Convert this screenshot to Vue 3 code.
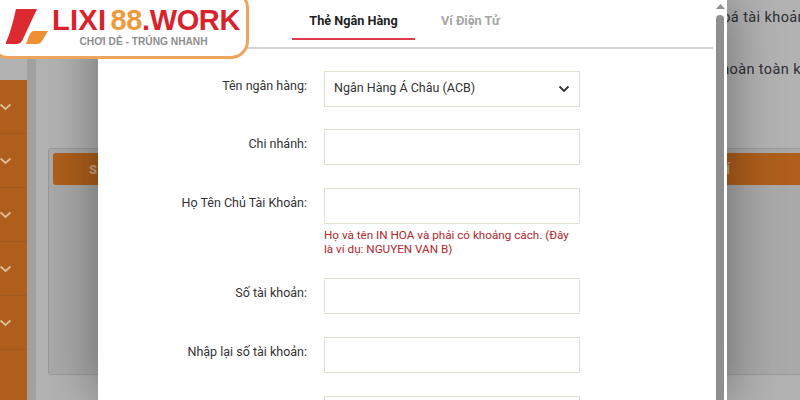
<script setup>
const sidebarRows = [1, 2, 3, 4, 5]

const fields = [
  { label: 'Chi nhánh:' },
  { label: 'Họ Tên Chủ Tài Khoản:', hint: 'Họ và tên IN HOA và phải có khoảng cách. (Đây là ví dụ: NGUYEN VAN B)' },
  { label: 'Số tài khoản:' },
  { label: 'Nhập lại số tài khoản:' },
  { label: '' }
]
</script>

<template>
  <div class="page">
    <div class="backdrop">
      <aside class="sidebar">
        <div v-for="row in sidebarRows" :key="row" class="side-row">
          <svg width="11" height="8" viewBox="0 0 11 8" class="side-chevron">
            <path d="M0.5 1.5 L5.5 6 L10.5 1.5" fill="none" stroke="#e0bd98" stroke-width="1.8" />
          </svg>
        </div>
      </aside>
      <div class="gutter"></div>
      <main class="content">
        <p class="bg-line first">oá tài khoản</p>
        <p class="bg-line second">hoàn toàn k</p>
        <section class="card">
          <div class="card-head">
            <span class="head-left">S</span>
            <span class="head-right">Í</span>
          </div>
        </section>
      </main>
    </div>

    <div class="modal">
      <div class="modal-body">
        <nav class="tabs">
          <button class="tab active">Thẻ Ngân Hàng</button>
          <button class="tab">Ví Điện Tử</button>
        </nav>
        <form class="form" @submit.prevent>
          <div class="row">
            <label class="label">Tên ngân hàng:</label>
            <div class="control select">
              <span class="select-text">Ngân Hàng Á Châu (ACB)</span>
              <svg width="12" height="8" viewBox="0 0 12 8">
                <path d="M1.5 1.5 L6 6 L10.5 1.5" fill="none" stroke="#333" stroke-width="1.8" />
              </svg>
            </div>
          </div>
          <div v-for="field in fields" :key="field.label" class="row">
            <label class="label">{{ field.label }}</label>
            <div class="stack">
              <div class="control"></div>
              <p v-if="field.hint" class="hint">{{ field.hint }}</p>
            </div>
          </div>
        </form>
      </div>
      <div class="scrollbar">
        <svg width="9" height="5" viewBox="0 0 9 5" class="arrow"><path d="M4.5 0 L9 5 H0 Z" fill="#8f8f8f" /></svg>
        <div class="thumb"></div>
      </div>
    </div>

    <div class="brand">
      <svg class="mark" width="46" height="38" viewBox="0 0 46 38">
        <path d="M10 0 H31 L16.5 31 C15 34 13 35 10 35 H1 C-1 35 0 33 1 31 C4 24 7 13 10 0 Z" fill="#dd2a30" />
        <path d="M27 22 H42 L36 32 C35 34 33 35 31 35 H20 C22 30 23 24 27 22 Z" fill="#ee8f33" />
      </svg>
      <div class="brand-text">
        <div class="brand-name"><span class="red lixi">LIXI</span><span class="orange">88</span><span class="red">.WORK</span></div>
        <div class="brand-tag">CHƠI DỄ - TRÚNG NHANH</div>
      </div>
    </div>
  </div>
</template>

<style scoped>
.page {
  position: relative;
  width: 800px;
  height: 400px;
  overflow: hidden;
  font-family: Roboto, "Liberation Sans", sans-serif;
  background: #b2b2b2;
}

.backdrop {
  display: flex;
  height: 400px;
}

.sidebar {
  width: 27px;
  flex: none;
  margin-top: 80px;
  background: #af5f1b;
}

.side-row {
  height: 54px;
  border-bottom: 1px solid #a05a20;
  box-sizing: border-box;
  display: flex;
  align-items: center;
}

.gutter {
  width: 9px;
  flex: none;
  background: #a2a0a0;
}

.content {
  flex: 1;
  min-width: 0;
  padding: 0 0 0 12px;
  overflow: hidden;
}

.bg-line {
  margin: 0;
  font-size: 14.5px;
  letter-spacing: 0.4px;
  line-height: 20px;
  color: #2d2f33;
  white-space: nowrap;
  text-align: right;
}

.bg-line.first {
  padding-top: 8px;
  margin-right: -6px;
}

.bg-line.second {
  padding-top: 32px;
  margin-right: -1px;
}

.card {
  margin-top: 68px;
  height: 227px;
  margin-right: -20px;
  box-sizing: border-box;
  padding: 4px;
  background: #a9a9a9;
  border: 1px solid #999;
  border-radius: 3px;
}

.card-head {
  height: 32px;
  background: #af5f1b;
  border-radius: 3px;
  display: flex;
  justify-content: space-between;
  align-items: center;
  color: #cfa887;
  font-size: 13px;
  font-weight: 700;
  padding: 0 0 0 36px;
}

.head-right {
  padding-right: 85px;
}

.modal {
  position: absolute;
  left: 98px;
  top: 0;
  width: 629px;
  height: 400px;
  display: flex;
  background: #fff;
  box-shadow: 0 0 50px rgba(0, 0, 0, 0.4);
}

.modal-body {
  width: 618px;
  flex: none;
}

.tabs {
  height: 47px;
  margin-right: 3px;
  border-bottom: 2px solid #d4d4d4;
  display: flex;
  padding-left: 194px;
  gap: 26px;
}

.tab {
  height: 40px;
  box-sizing: border-box;
  padding: 3px 0 0;
  background: none;
  border: 0;
  border-bottom: 2px solid transparent;
  font: 700 12.7px Roboto, "Liberation Sans", sans-serif;
  color: #a6a6a6;
}

.tab.active {
  width: 123px;
  color: #222;
  border-bottom-color: #dd3d4b;
}

.form {
  padding-top: 21.6px;
  display: flex;
  flex-direction: column;
  gap: 22.6px;
}

.row {
  display: grid;
  grid-template-columns: 209px 256px;
  column-gap: 17px;
}

.label {
  text-align: right;
  font-size: 12.5px;
  line-height: 16px;
  color: #333;
  padding-top: 7px;
}

.control {
  height: 36px;
  box-sizing: border-box;
  border: 1px solid #e4dfd3;
  background: #fff;
}

.select {
  display: flex;
  align-items: center;
  justify-content: space-between;
  padding: 0 9px;
  font-size: 12.5px;
  color: #333;
}

.select-text {
  margin-top: -3px;
}

.hint {
  margin: 4px 0 0;
  font-size: 11.7px;
  line-height: 14px;
  color: #b3262a;
}

.scrollbar {
  width: 8px;
  display: flex;
  flex-direction: column;
  align-items: center;
  flex: none;
}

.arrow {
  margin-top: 4px;
}

.thumb {
  margin-top: 6px;
  width: 8px;
  flex: 1;
  background: #8f8f8f;
  border-radius: 4px 4px 0 0;
}

.brand {
  position: absolute;
  left: -10px;
  top: -10px;
  width: 259px;
  height: 69px;
  box-sizing: border-box;
  background: #fff;
  border: 3px solid #eda45d;
  border-radius: 18px;
  display: flex;
  padding: 16px 0 0 13px;
}

.mark {
  flex: none;
  overflow: visible;
}

.brand-text {
  margin-left: 1px;
  display: flex;
  flex-direction: column;
  align-items: center;
  margin-top: -3px;
}

.brand-name {
  font-family: "Liberation Sans", Arial, sans-serif;
  font-size: 29px;
  font-weight: 700;
  line-height: 29px;
  letter-spacing: -0.35px;
  white-space: nowrap;
  margin-left: -1px;
}

.red { color: #d8232d; }
.lixi { letter-spacing: 0.3px; }
.orange { color: #ef9a3d; margin-left: 4px; }

.brand-tag {
  font-family: "Liberation Sans", Arial, sans-serif;
  font-size: 10.2px;
  font-weight: 700;
  color: #8e8e8e;
  line-height: 13px;
  white-space: nowrap;
  margin-left: -6px;
}
</style>
